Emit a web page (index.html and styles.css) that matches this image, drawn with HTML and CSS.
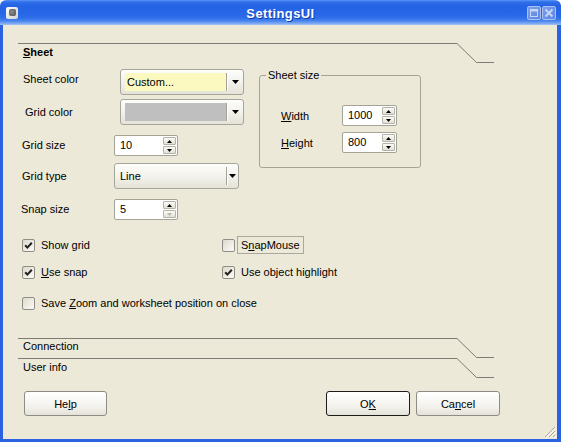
FILE: index.html
```html
<!DOCTYPE html>
<html>
<head>
<meta charset="utf-8">
<title>SettingsUI</title>
<link rel="stylesheet" href="styles.css">
</head>
<body>
<div class="window">
  <div class="titlebar">
    <div class="tb-left"><div class="app-icon"><span class="app-dot"></span></div></div>
    <div class="title">SettingsUI</div>
    <div class="tb-right">
      <div class="tb-btn"><svg width="14" height="14" viewBox="0 0 14 14"><rect x="3.5" y="3.5" width="7" height="7" fill="none" stroke="#c8d5f4" stroke-width="1"/><rect x="3" y="3" width="8" height="2.5" fill="#c8d5f4"/></svg></div>
      <div class="tb-btn"><svg width="14" height="14" viewBox="0 0 14 14"><path d="M3.5 3.5 L10.5 10.5 M10.5 3.5 L3.5 10.5" stroke="#c8d5f4" stroke-width="1.8" fill="none"/></svg></div>
    </div>
  </div>
  <div class="client">
    <div class="tab-head tab-sheet">
      <div class="tab-line"><span class="tab-label bold"><u>S</u>heet</span></div>
      <svg class="tab-step" width="37" height="20" viewBox="0 0 37 20"><path d="M0 0.5 L19.5 19.5 L37 19.5" fill="none" stroke="#7c7c74" stroke-width="1"/></svg>
    </div>
    <div class="sheet">
      <div class="top">
        <div class="form">
          <div class="row r1">
            <span class="lbl up">Sheet color</span>
            <div class="combo wide shift">
              <span class="combo-field yellow">Custom...</span>
              <span class="combo-sep"></span>
              <span class="combo-arrow"><svg width="7" height="4" viewBox="0 0 7 4"><polygon points="0,0 7,0 3.5,4" fill="#000"/></svg></span>
            </div>
          </div>
          <div class="row r2">
            <span class="lbl ind">Grid color</span>
            <div class="combo wide shift">
              <span class="combo-field gray"></span>
              <span class="combo-sep"></span>
              <span class="combo-arrow"><svg width="7" height="4" viewBox="0 0 7 4"><polygon points="0,0 7,0 3.5,4" fill="#000"/></svg></span>
            </div>
          </div>
          <div class="row r3">
            <span class="lbl l4">Grid size</span>
            <div class="spin">
              <span class="spin-val">10</span>
              <span class="spin-btns">
                <span class="sb"><svg width="5" height="3" viewBox="0 0 5 3"><polygon points="0,3 5,3 2.5,0" fill="#000"/></svg></span>
                <span class="sb"><svg width="5" height="3" viewBox="0 0 5 3"><polygon points="0,0 5,0 2.5,3" fill="#000"/></svg></span>
              </span>
            </div>
          </div>
          <div class="row r4">
            <span class="lbl l4">Grid type</span>
            <div class="combo wide plain">
              <span class="combo-text">Line</span>
              <span class="combo-sep"></span>
              <span class="combo-arrow"><svg width="7" height="4" viewBox="0 0 7 4"><polygon points="0,0 7,0 3.5,4" fill="#000"/></svg></span>
            </div>
          </div>
          <div class="row r5">
            <span class="lbl l3">Snap size</span>
            <div class="spin">
              <span class="spin-val">5</span>
              <span class="spin-btns">
                <span class="sb"><svg width="5" height="3" viewBox="0 0 5 3"><polygon points="0,3 5,3 2.5,0" fill="#000"/></svg></span>
                <span class="sb"><svg width="5" height="3" viewBox="0 0 5 3"><polygon points="0,0 5,0 2.5,3" fill="#b8b8b0"/></svg></span>
              </span>
            </div>
          </div>
        </div>
        <fieldset class="group">
          <legend>Sheet size</legend>
          <div class="grow g1">
            <span class="glbl"><u>W</u>idth</span>
            <div class="spin small">
              <span class="spin-val">1000</span>
              <span class="spin-btns">
                <span class="sb"><svg width="5" height="3" viewBox="0 0 5 3"><polygon points="0,3 5,3 2.5,0" fill="#000"/></svg></span>
                <span class="sb"><svg width="5" height="3" viewBox="0 0 5 3"><polygon points="0,0 5,0 2.5,3" fill="#000"/></svg></span>
              </span>
            </div>
          </div>
          <div class="grow g2">
            <span class="glbl"><u>H</u>eight</span>
            <div class="spin small">
              <span class="spin-val">800</span>
              <span class="spin-btns">
                <span class="sb"><svg width="5" height="3" viewBox="0 0 5 3"><polygon points="0,3 5,3 2.5,0" fill="#000"/></svg></span>
                <span class="sb"><svg width="5" height="3" viewBox="0 0 5 3"><polygon points="0,0 5,0 2.5,3" fill="#000"/></svg></span>
              </span>
            </div>
          </div>
        </fieldset>
      </div>
      <div class="checks">
        <div class="check">
          <span class="cb"><svg width="11" height="11" viewBox="0 0 11 11"><path d="M2.2 5.2 L4.4 7.6 L8.8 2.8" fill="none" stroke="#21211d" stroke-width="2"/></svg></span>
          <span>Show <u>g</u>rid</span>
        </div>
        <div class="check focus">
          <span class="cb"></span>
          <span class="focus-box">S<u>n</u>apMouse</span>
        </div>
        <div class="check">
          <span class="cb"><svg width="11" height="11" viewBox="0 0 11 11"><path d="M2.2 5.2 L4.4 7.6 L8.8 2.8" fill="none" stroke="#21211d" stroke-width="2"/></svg></span>
          <span><u>U</u>se snap</span>
        </div>
        <div class="check">
          <span class="cb"><svg width="11" height="11" viewBox="0 0 11 11"><path d="M2.2 5.2 L4.4 7.6 L8.8 2.8" fill="none" stroke="#21211d" stroke-width="2"/></svg></span>
          <span>Use ob<u>j</u>ect highlight</span>
        </div>
      </div>
      <div class="check save">
        <span class="cb"></span>
        <span>Save <u>Z</u>oom and worksheet position on close</span>
      </div>
    </div>
    <div class="tab-head tab-conn">
      <div class="tab-line"><span class="tab-label t1">Connection</span></div>
      <svg class="tab-step" width="37" height="20" viewBox="0 0 37 20"><path d="M0 0.5 L19.5 19.5 L37 19.5" fill="none" stroke="#7c7c74" stroke-width="1"/></svg>
    </div>
    <div class="tab-head tab-user">
      <div class="tab-line"><span class="tab-label">User info</span></div>
      <svg class="tab-step" width="37" height="20" viewBox="0 0 37 20"><path d="M0 0.5 L19.5 19.5 L37 19.5" fill="none" stroke="#7c7c74" stroke-width="1"/></svg>
    </div>
    <div class="buttons">
      <div class="btn help">He<u>l</u>p</div>
      <div class="btn ok default">O<u>K</u></div>
      <div class="btn cancel">Ca<u>n</u>cel</div>
    </div>
    <div class="grip-row">
      <svg class="grip" width="12" height="12" viewBox="0 0 12 12">
        <path d="M11 1 L1 11 M11 5 L5 11 M11 9 L9 11" stroke="#aca899" stroke-width="1" fill="none"/>
        <path d="M12 2 L2 12 M12 6 L6 12 M12 10 L10 12" stroke="#ffffff" stroke-width="1" fill="none"/>
      </svg>
    </div>
  </div>
</div>
</body>
</html>
```

FILE: styles.css
```css
html, body {
  margin: 0;
  padding: 0;
  background: #ffffff;
}

body {
  font-family: "Liberation Sans", Arial, sans-serif;
  font-size: 11px;
  color: #000;
}

.window {
  width: 561px;
  height: 442px;
  display: flex;
  flex-direction: column;
  border-radius: 6px 6px 0 0;
  overflow: hidden;
}

/* ---------- title bar ---------- */
.titlebar {
  height: 25px;
  flex: none;
  display: grid;
  grid-template-columns: 1fr auto 1fr;
  align-items: center;
  background: linear-gradient(to bottom,
    #5b95f5 0px, #2f6fea 2px, #2463e4 6px, #2766e6 14px,
    #2f6ee9 18px, #4a86ee 21px, #88b0f3 24px, #a9c6f6 25px);
}

.tb-left {
  display: flex;
  padding-left: 6px;
}

.app-icon {
  width: 12px;
  height: 12px;
  box-sizing: border-box;
  border-radius: 2px;
  background: linear-gradient(135deg, #ffffff, #d0d0d0);
  display: flex;
  align-items: center;
  justify-content: center;
}

.app-dot {
  width: 7px;
  height: 7px;
  border-radius: 2px;
  background: radial-gradient(circle at 40% 40%, #8a8a8a, #505050);
}

.title {
  font-weight: bold;
  font-size: 13px;
  letter-spacing: 0.4px;
  color: #ffffff;
  text-shadow: 1px 1px 0 #0f3aa8;
  padding-top: 1px;
}

.tb-right {
  display: flex;
  justify-content: flex-end;
  gap: 1px;
  padding-right: 5px;
}

.tb-btn {
  width: 14px;
  height: 14px;
  box-sizing: border-box;
  border: 1px solid #a9c0f0;
  border-radius: 2px;
  background: linear-gradient(135deg, #7aa0ec, #5a85e4);
  display: flex;
  align-items: center;
  justify-content: center;
}

.tb-btn svg {
  display: block;
  margin: -1px;
}

/* ---------- client area ---------- */
.client {
  flex: 1;
  display: flex;
  flex-direction: column;
  background: #ece9d8;
  border-left: 3px solid #2b62e2;
  border-right: 4px solid #2b62e2;
  border-bottom: 3px solid #2b62e2;
  min-height: 0;
}

.tab-head {
  display: flex;
  margin-left: 15px;
  height: 20px;
  flex: none;
}

.tab-sheet { margin-top: 18px; }
.tab-conn { margin-top: 27px; }

.tab-line {
  width: 439px;
  border-top: 1px solid #7c7c74;
}

.tab-step {
  display: block;
  margin-top: 0;
}

.tab-label {
  display: block;
  padding-left: 5px;
  padding-top: 2px;
  line-height: 13px;
}

.tab-label.t1 { padding-top: 1px; }

.bold { font-weight: bold; }

/* ---------- sheet page ---------- */
.sheet {
  margin-left: 15px;
  display: flex;
  flex-direction: column;
}

.top {
  display: flex;
  align-items: flex-start;
}

.form {
  width: 241px;
  margin-top: 6px;
  display: flex;
  flex-direction: column;
}

.row {
  display: flex;
  align-items: center;
}

.r2 { margin-top: 4px; }
.r3 { margin-top: 10px; }
.r4 { margin-top: 7px; }
.r5 { margin-top: 10px; }

.lbl {
  width: 96px;
  box-sizing: border-box;
  padding-left: 5px;
  line-height: 13px;
}

.lbl.up { margin-bottom: 6px; }
.lbl.ind { padding-left: 7px; }
.lbl.l4 { padding-left: 4px; }
.lbl.l3 { padding-left: 3px; }

/* combo box */
.combo {
  height: 26px;
  box-sizing: border-box;
  border: 1px solid #a5a59b;
  border-radius: 3px;
  background: linear-gradient(to bottom, #fdfdfb 0%, #f3f2ec 50%, #e5e3d7 100%);
  display: flex;
  align-items: center;
}

.combo.wide { width: 124px; }
.combo.shift { margin-left: 6px; }
.combo.plain { width: 125px; }

.combo-field {
  margin-left: 4px;
  width: 101px;
  height: 18px;
  line-height: 18px;
  padding-left: 2px;
  box-sizing: border-box;
}

.combo-field.yellow { background: #fbf9c0; }
.combo-field.gray { background: #bfbfbf; }

.combo-text {
  flex: none;
  width: 101px;
  padding-left: 5px;
  line-height: 18px;
}

.combo.plain .combo-text { width: 106px; }

.combo-sep {
  width: 1px;
  height: 18px;
  background: #a2a29a;
  box-shadow: 1px 0 0 #ffffff;
  margin-left: 0;
}

.combo-arrow {
  flex: 1;
  display: flex;
  justify-content: center;
  align-items: center;
}

.combo-arrow svg { display: block; }

/* spinner */
.spin {
  width: 64px;
  height: 21px;
  box-sizing: border-box;
  border: 1px solid #a3a397;
  border-radius: 2px;
  background: #ffffff;
  display: flex;
}

.spin.small {
  width: 55px;
  height: 21px;
}

.spin-val {
  flex: 1;
  padding-left: 5px;
  line-height: 19px;
}

.spin-btns {
  width: 13px;
  display: flex;
  flex-direction: column;
  gap: 1px;
  padding: 1px 1px 1px 0;
}

.sb {
  flex: 1;
  box-sizing: border-box;
  border: 1px solid #b4b3a8;
  border-radius: 1px;
  background: linear-gradient(to bottom, #fbfbf8, #e3e1d5);
  display: flex;
  align-items: center;
  justify-content: center;
}

.sb svg { display: block; }

/* group box */
.group {
  margin: 5px 0 0 0;
  width: 162px;
  height: 100px;
  box-sizing: border-box;
  border: 1px solid #a6a497;
  border-radius: 3px;
  padding: 0 0 0 6px;
  min-width: 0;
}

.group legend {
  padding: 0 2px;
  line-height: 14px;
}

.grow {
  display: flex;
  align-items: center;
}

.g1 { margin-top: 23px; }
.g2 { margin-top: 6px; }

.glbl {
  width: 76px;
  box-sizing: border-box;
  padding-left: 15px;
}

/* checkboxes */
.checks {
  display: grid;
  grid-template-columns: 200px 200px;
  grid-template-rows: 18px 16px;
  row-gap: 10px;
  padding-left: 4px;
  margin-top: 16px;
}

.check {
  display: flex;
  align-items: center;
  gap: 6px;
  line-height: 16px;
}

.check.focus { gap: 2px; }

.check.save {
  padding-left: 4px;
  margin-top: 15px;
  height: 16px;
}

.cb {
  width: 13px;
  height: 13px;
  flex: none;
  box-sizing: border-box;
  border: 1px solid #8f8e86;
  border-radius: 2px;
  background: linear-gradient(135deg, #dcd9cc 0%, #eeece4 55%, #fbfaf6 100%);
  display: flex;
  align-items: center;
  justify-content: center;
}

.cb svg { display: block; }

.focus-box {
  border: 1px solid #a8a89e;
  padding: 0 3px;
  line-height: 16px;
  height: 16px;
}

/* buttons */
.buttons {
  display: flex;
  margin-top: 13px;
  padding-left: 21px;
  padding-right: 57px;
}

.btn {
  height: 25px;
  box-sizing: border-box;
  border: 1px solid #8d8c84;
  border-radius: 3px;
  background: linear-gradient(to bottom, #ffffff 0%, #f4f3ee 60%, #e4e2d8 100%);
  display: flex;
  align-items: center;
  justify-content: center;
}

.btn.help { width: 83px; }
.btn.ok { width: 84px; margin-left: auto; }
.btn.cancel { width: 84px; margin-left: 6px; }
.btn.default { border-color: #1c1c1c; }

.grip-row {
  margin-top: auto;
  display: flex;
  justify-content: flex-end;
  padding-right: 1px;
  padding-bottom: 1px;
}

.grip { display: block; }
```
